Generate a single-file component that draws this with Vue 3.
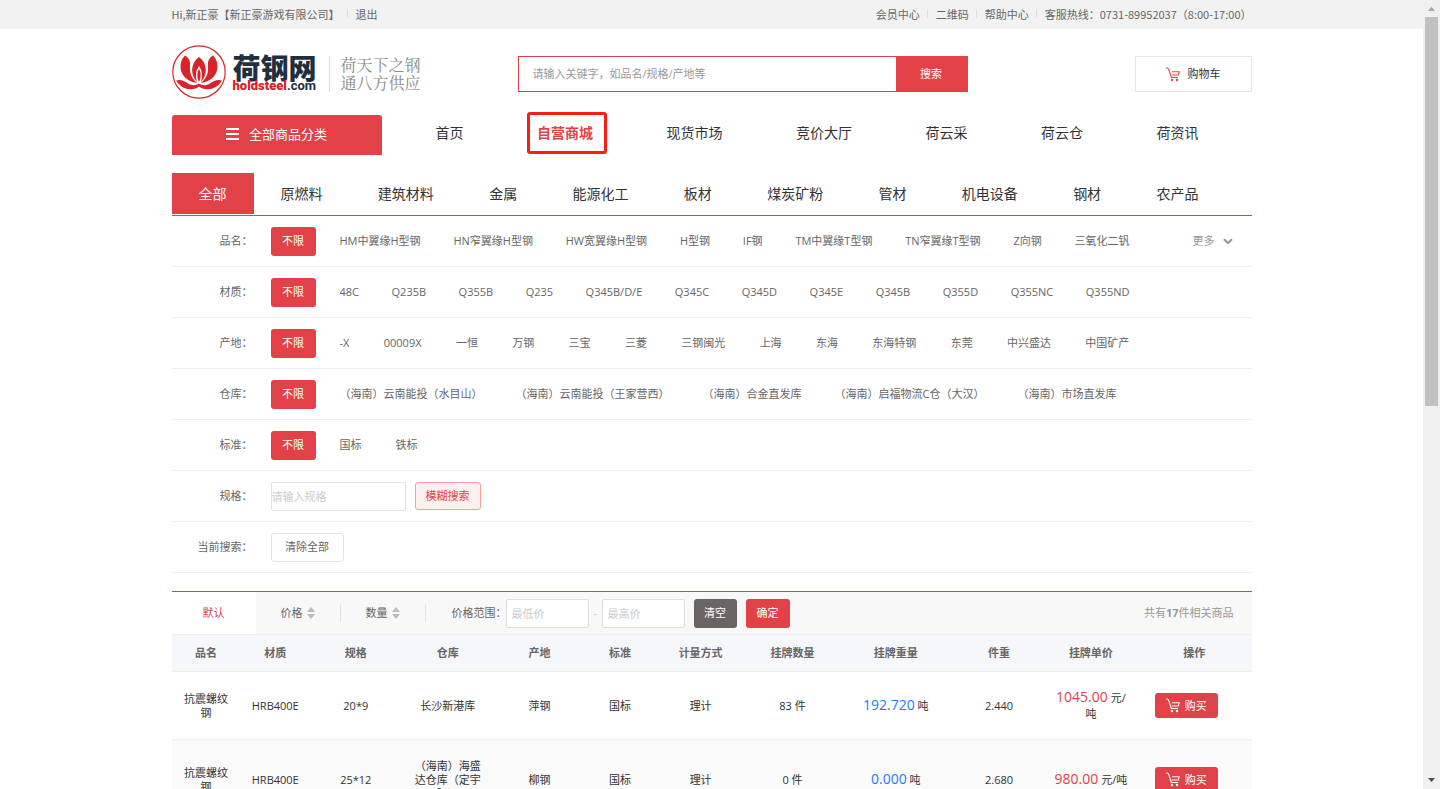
<script setup>
import { ref } from 'vue'

const keyword = ref('')
const spec = ref('')
const minPrice = ref('')
const maxPrice = ref('')

const navItems = ['首页', '自营商城', '现货市场', '竞价大厅', '荷云采', '荷云仓', '荷资讯']
const categories = ['原燃料', '建筑材料', '金属', '能源化工', '板材', '煤炭矿粉', '管材', '机电设备', '钢材', '农产品']

const filters = [
  { label: '品名：', fit: 'spread', more: true, items: ['HM中翼缘H型钢', 'HN窄翼缘H型钢', 'HW宽翼缘H型钢', 'H型钢', 'IF钢', 'TM中翼缘T型钢', 'TN窄翼缘T型钢', 'Z向钢', '三氧化二钒'] },
  { label: '材质：', fit: 'spread', items: ['48C', 'Q235B', 'Q355B', 'Q235', 'Q345B/D/E', 'Q345C', 'Q345D', 'Q345E', 'Q345B', 'Q355D', 'Q355NC', 'Q355ND'] },
  { label: '产地：', fit: 'spread', items: ['-X', '00009X', '一恒', '万钢', '三宝', '三菱', '三钢闽光', '上海', '东海', '东海特钢', '东莞', '中兴盛达', '中国矿产'] },
  { label: '仓库：', fit: 'tight', items: ['（海南）云南能投（水目山）', '（海南）云南能投（王家营西）', '（海南）合金直发库', '（海南）启福物流C仓（大汉）', '（海南）市场直发库'] },
  { label: '标准：', fit: '', items: ['国标', '铁标'] },
]

const columns = [
  { title: '品名', size: 's' }, { title: '材质', size: 's' }, { title: '规格', size: 'm' },
  { title: '仓库', size: 'm' }, { title: '产地', size: 'm' }, { title: '标准', size: 's' },
  { title: '计量方式', size: 'm' }, { title: '挂牌数量', size: 'm' }, { title: '挂牌重量', size: 'l' },
  { title: '件重', size: 'm' }, { title: '挂牌单价', size: 'm' }, { title: '操作', size: 'l' },
]

const rows = [
  { name: '抗震螺纹钢', grade: 'HRB400E', spec: '20*9', depot: '长沙新港库', origin: '萍钢', count: '83', weight: '192.720', piece: '2.440', price: '1045.00' },
  { name: '抗震螺纹钢', grade: 'HRB400E', spec: '25*12', depot: '（海南）海盛达仓库（定宇驿）', origin: '柳钢', count: '0', weight: '0.000', piece: '2.680', price: '980.00' },
]
</script>

<template>
  <div class="shell">
    <div class="page">
      <div class="topbar">
        <div class="wrap topbar-row">
          <div class="links">
            <span>Hi,新正豪【新正豪游戏有限公司】</span>
            <a href="#">退出</a>
          </div>
          <div class="links">
            <a href="#">会员中心</a>
            <a href="#">二维码</a>
            <a href="#">帮助中心</a>
            <span>客服热线：0731-89952037（8:00-17:00）</span>
          </div>
        </div>
      </div>

      <header class="wrap header">
        <a class="logo" href="#" aria-label="荷钢网">
          <svg class="lotus" viewBox="0 0 54 54" aria-hidden="true">
            <circle cx="27" cy="27" r="26.2" fill="#fff" stroke="#d8232a" stroke-width="1.2" />
            <g fill="#d8232a">
              <path d="M13 10.500C8 15 7 24 11 30C14 34.500 19 37 25 38C19 33 17.500 27 18 22C18.500 17 17.500 13 13 10.500Z" />
              <path d="M41 10.500C46 15 47 24 43 30C40 34.500 35 37 29 38C35 33 36.500 27 36 22C35.500 17 36.500 13 41 10.500Z" />
              <path d="M27 12C18.500 18.500 18 29 25 37C23.500 31 23.500 26 27 21C30.500 26 30.500 31 29 37C36 29 35.500 18.500 27 12Z" />
              <path d="M27 24C24.600 28 25 33 27 37C29 33 29.400 28 27 24Z" />
              <path d="M4 35.500C8 34 12 35.500 16 38.500C20 41 24 40.500 27 38.500C30 40.500 34 41 38 38.500C42 35.500 46 34 50 35.500C47 40 43 43.500 38 44C33 44.500 29 43.500 27 41.500C25 43.500 21 44.500 16 44C11 43.500 7 40 4 35.500Z" />
            </g>
          </svg>
          <span class="brand">
            <span class="brand-cn">荷钢网</span>
            <span class="brand-en"><b>holdsteel</b>.com</span>
          </span>
          <span class="slogan">荷天下之钢<br>通八方供应</span>
        </a>
        <form class="search" @submit.prevent>
          <input v-model="keyword" type="text" aria-label="关键字" placeholder="请输入关键字，如品名/规格/产地等">
          <button type="submit">搜索</button>
        </form>
        <a class="cart" href="#">
          <svg class="cart-icon" viewBox="0 0 14 15" aria-hidden="true">
            <path d="M0 0.800C2 1 2.600 1.500 3 3L5.300 10.500H12M6 4.700H13.200L12.400 8H6" fill="none" stroke="currentColor" stroke-width="1.100" />
            <circle cx="6" cy="13" r="1.200" fill="currentColor" /><circle cx="11" cy="13" r="1.200" fill="currentColor" />
          </svg>
          <span>购物车</span>
        </a>
      </header>

      <nav class="wrap mainnav">
        <button class="all-cats" type="button">
          <svg class="bars" viewBox="0 0 13 12" aria-hidden="true">
            <path d="M0 1H13M0 6H13M0 11H13" stroke="#fff" stroke-width="2" />
          </svg>
          <span>全部商品分类</span>
        </button>
        <div class="nav-list">
          <a v-for="(n, i) in navItems" :key="n" href="#" :class="{ current: i === 1 }">{{ n }}</a>
        </div>
      </nav>

      <div class="wrap cats">
        <a class="cat-active" href="#">全部</a>
        <div class="cat-list">
          <a v-for="c in categories" :key="c" href="#">{{ c }}</a>
        </div>
      </div>

      <section class="wrap">
        <div v-for="f in filters" :key="f.label" class="filter">
          <span class="filter-label">{{ f.label }}</span>
          <button class="unlimited" type="button">不限</button>
          <div class="options" :class="f.fit">
            <a v-for="o in f.items" :key="o" href="#">{{ o }}</a>
          </div>
          <a v-if="f.more" class="more" href="#">
            更多
            <svg viewBox="0 0 10 7" aria-hidden="true"><path d="M1 1.200L5 5L9 1.200" fill="none" stroke="#999" stroke-width="2.200" /></svg>
          </a>
        </div>
        <div class="filter">
          <label class="filter-label" for="spec">规格：</label>
          <input id="spec" v-model="spec" class="box spec" type="text" placeholder="请输入规格">
          <button class="fuzzy" type="button">模糊搜索</button>
        </div>
        <div class="filter">
          <span class="filter-label">当前搜索：</span>
          <button class="clear-all" type="button">清除全部</button>
        </div>
      </section>

      <section class="wrap results">
        <div class="toolbar">
          <button class="sort active" type="button">默认</button>
          <button v-for="s in ['价格', '数量']" :key="s" class="sort divided" type="button">
            {{ s }}
            <svg viewBox="0 0 8 12" aria-hidden="true"><path d="M4 0L8 5H0ZM0 7H8L4 12Z" fill="#bbb" /></svg>
          </button>
          <label class="range-label" for="min">价格范围：</label>
          <input id="min" v-model="minPrice" class="box price-box" type="text" placeholder="最低价">
          <span class="dash">-</span>
          <input v-model="maxPrice" class="box price-box" type="text" aria-label="最高价" placeholder="最高价">
          <button class="reset" type="button">清空</button>
          <button class="confirm" type="button">确定</button>
          <span class="total">共有<b>17</b>件相关商品</span>
        </div>
        <table>
          <colgroup>
            <col v-for="c in columns" :key="c.title" :class="c.size">
          </colgroup>
          <thead>
            <tr><th v-for="c in columns" :key="c.title">{{ c.title }}</th></tr>
          </thead>
          <tbody>
            <tr v-for="r in rows" :key="r.spec">
              <td>{{ r.name }}</td>
              <td>{{ r.grade }}</td>
              <td>{{ r.spec }}</td>
              <td>{{ r.depot }}</td>
              <td>{{ r.origin }}</td>
              <td>国标</td>
              <td>理计</td>
              <td>{{ r.count }} 件</td>
              <td><span class="num blue">{{ r.weight }}</span> 吨</td>
              <td>{{ r.piece }}</td>
              <td class="price"><span class="num red">{{ r.price }}</span> 元/吨</td>
              <td class="action">
                <button class="buy" type="button">
                  <svg class="cart-icon" viewBox="0 0 14 15" aria-hidden="true">
                    <path d="M0 0.800C2 1 2.600 1.500 3 3L5.300 10.500H12M6 4.700H13.200L12.400 8H6" fill="none" stroke="currentColor" stroke-width="1.100" />
                    <circle cx="6" cy="13" r="1.200" fill="currentColor" /><circle cx="11" cy="13" r="1.200" fill="currentColor" />
                  </svg>
                  购买
                </button>
              </td>
            </tr>
          </tbody>
        </table>
      </section>
    </div>

    <div class="scrollbar" aria-hidden="true">
      <svg viewBox="0 0 17 17"><path d="M5 11L8.500 7L12 11Z" fill="#a3a3a3" /></svg>
      <div class="track"><div class="thumb"></div></div>
      <svg viewBox="0 0 17 17"><path d="M5 6L8.500 10L12 6Z" fill="#505050" /></svg>
    </div>
  </div>
</template>

<style>
body {
  margin: 0;
  background: #fff;
}
</style>

<style scoped>
.shell {
  display: flex;
  height: 100vh;
  overflow: hidden;
  font-family: "Open Sans", "Noto Sans CJK SC", sans-serif;
  font-size: 11px;
  line-height: 14px;
  color: #666;
}
.shell * {
  box-sizing: border-box;
}
.page {
  flex: 1;
  min-width: 0;
  overflow: hidden;
}
.wrap {
  max-width: 1080px;
  margin: 0 auto;
}
a {
  color: inherit;
  text-decoration: none;
  white-space: nowrap;
}
button,
input {
  font: inherit;
  margin: 0;
  padding: 0;
  border: 0;
  outline: none;
}
button {
  cursor: pointer;
  white-space: nowrap;
}

.topbar {
  background: #f2f2f2;
  font-family: "Noto Sans CJK SC", sans-serif;
}
.topbar-row {
  display: flex;
  justify-content: space-between;
  align-items: center;
  height: 29px;
  padding-bottom: 2px;
}
.links {
  display: flex;
  align-items: center;
}
.links > * + * {
  display: flex;
  align-items: center;
}
.links > * + *::before {
  content: "";
  height: 9px;
  margin: 0 8px 0 7px;
  border-left: 1px solid #ddd;
}

.header {
  display: flex;
  align-items: center;
  height: 86px;
}
.logo {
  display: flex;
  align-items: center;
  width: 346px;
}
.lotus {
  width: 54px;
  height: 54px;
}
.brand {
  display: flex;
  flex-direction: column;
  margin: 4px 0 0 7px;
  padding-right: 12px;
  border-right: 1px solid #ddd;
}
.brand-cn {
  font-size: 28px;
  line-height: 24px;
  font-weight: 900;
  color: #1e2f3f;
}
.brand-en {
  font-family: Roboto, sans-serif;
  font-size: 13px;
  line-height: 12px;
  font-weight: 700;
  color: #1e2f3f;
}
.brand-en b {
  color: #d8232a;
}
.slogan {
  margin: 4px 0 0 11px;
  font-family: "Noto Serif CJK SC", "AR PL UKai CN", KaiTi, "Noto Sans CJK SC", serif;
  font-size: 16px;
  line-height: 18px;
  color: #888;
}
.search {
  display: flex;
  width: 450px;
  height: 36px;
  margin-top: 4px;
  border: 1px solid #e24147;
}
.search input {
  flex: 1;
  min-width: 0;
  padding: 0 14px;
  background: #fff;
  color: #333;
}
.search input::placeholder {
  color: #999;
}
.search button {
  width: 71px;
  background: #e24147;
  color: #fff;
}
.cart {
  display: flex;
  align-items: center;
  justify-content: center;
  gap: 8px;
  width: 117px;
  height: 36px;
  margin-top: 4px;
  margin-left: auto;
  border: 1px solid #e5e5e5;
  color: #333;
}
.cart-icon {
  width: 14px;
  height: 15px;
}
.cart .cart-icon {
  color: #e24147;
}

.mainnav {
  display: flex;
  align-items: flex-start;
  height: 58px;
}
.all-cats {
  display: flex;
  align-items: center;
  justify-content: center;
  gap: 10px;
  width: 210px;
  height: 40px;
  padding-bottom: 2px;
  background: #e24147;
  border-radius: 3px 3px 0 0;
  color: #fff;
  font-size: 13px;
}
.bars {
  width: 13px;
  height: 12px;
}
.nav-list {
  flex: 1;
  display: flex;
  align-items: center;
  justify-content: space-between;
  height: 36px;
  padding: 0 53px 0 54px;
  font-size: 14px;
  color: #333;
}
.nav-list .current {
  margin: 0 -14px 0 -10px;
  padding: 11px 11px 11px 7px;
  border: 3px solid #ff1c10;
  border-radius: 3px;
  color: #e24147;
  font-weight: 700;
}

.cats {
  display: flex;
  padding-bottom: 1px;
  border-bottom: 1px solid #e24147;
  font-size: 14px;
  line-height: 41px;
  color: #333;
}
.cat-active {
  width: 82px;
  background: #e24147;
  color: #fff;
  text-align: center;
}
.cat-list {
  flex: 1;
  display: flex;
  justify-content: space-between;
  padding: 0 53px 0 27px;
}

.filter {
  display: flex;
  align-items: center;
  height: 51px;
  border-bottom: 1px solid #eee;
}
.filter-label {
  width: 81px;
  margin-right: 18px;
  text-align: right;
}
.unlimited,
.reset,
.confirm {
  height: 29px;
  border-radius: 3px;
  background: #e24147;
  color: #fff;
}
.unlimited {
  width: 45px;
}
.options {
  display: flex;
  gap: 34px;
  margin-left: 24px;
}
.options.spread {
  flex: 0 1 790px;
  gap: 8px;
  justify-content: space-between;
}
.options.tight {
  gap: 33px;
}
.more {
  display: flex;
  align-items: center;
  gap: 8px;
  margin-left: auto;
  padding-right: 19px;
  color: #999;
}
.more svg {
  width: 10px;
  height: 7px;
}
.box {
  height: 29px;
  border: 1px solid #e2e2e2;
  border-radius: 2px;
  background: #fff;
  color: #333;
}
.box::placeholder {
  color: #ccc;
}
.spec {
  width: 135px;
}
.fuzzy {
  width: 66px;
  height: 28px;
  margin-left: 9px;
  border: 1px solid #ff9c9c;
  border-radius: 3px;
  background: #fff0f0;
  color: #e24147;
}
.clear-all {
  width: 73px;
  height: 29px;
  border: 1px solid #e2e2e2;
  border-radius: 3px;
  background: #fff;
  color: #666;
}

.results {
  margin-top: 18px;
  border-top: 1px solid #e24147;
}
.toolbar {
  display: flex;
  align-items: center;
  height: 43px;
  border-bottom: 1px solid #eee;
  background: #f8f8f8;
}
.sort {
  display: flex;
  align-items: center;
  justify-content: center;
  gap: 4px;
  width: 84px;
  height: 18px;
  background: transparent;
  color: #666;
}
.sort svg {
  width: 8px;
  height: 12px;
}
.sort.divided {
  width: 85px;
  border-right: 1px solid #e2e2e2;
}
.sort.active {
  height: 42px;
  background: #fff;
  color: #e24147;
}
.range-label {
  margin-left: 26px;
  width: 54px;
  white-space: nowrap;
}
.price-box {
  width: 83px;
  padding: 0 5px;
  border-color: #ddd;
}
.dash {
  width: 13px;
  text-align: center;
  color: #ccc;
}
.reset {
  width: 43px;
  margin: 0 9px;
  background: #6b6464;
}
.confirm {
  width: 44px;
}
.total {
  margin-left: auto;
  padding-right: 18px;
  color: #999;
}

table {
  width: 100%;
  table-layout: fixed;
  border-collapse: separate;
  border-spacing: 0;
  color: #333;
  text-align: center;
}
.s {
  width: 6.4%;
}
.m {
  width: 8.5%;
}
.l {
  width: 10.6%;
}
th {
  height: 37px;
  padding: 0;
  border-bottom: 1px solid #eee;
  background: #f5f7fb;
  color: #666;
  font-weight: 700;
}
td {
  height: 68px;
  padding: 0 8px;
  border-bottom: 1px solid #eee;
}
tbody tr:nth-child(even) td {
  height: 80px;
  background: #fafafa;
}
td.price {
  line-height: 16px;
}
.num {
  font-size: 14px;
}
.blue {
  color: #1a7cff;
}
.red {
  color: #e24147;
}
td.action {
  padding-right: 24px;
}
.buy {
  display: inline-flex;
  align-items: center;
  justify-content: center;
  gap: 5px;
  width: 63px;
  height: 25px;
  border-radius: 3px;
  background: #e24147;
  color: #fff;
}

.scrollbar {
  display: flex;
  flex-direction: column;
  width: 17px;
  background: #f0f0f0;
}
.scrollbar svg {
  width: 17px;
  height: 17px;
}
.track {
  flex: 1;
  padding: 0 2px;
}
.thumb {
  height: 51.5%;
  background: #c1c1c1;
}
</style>
